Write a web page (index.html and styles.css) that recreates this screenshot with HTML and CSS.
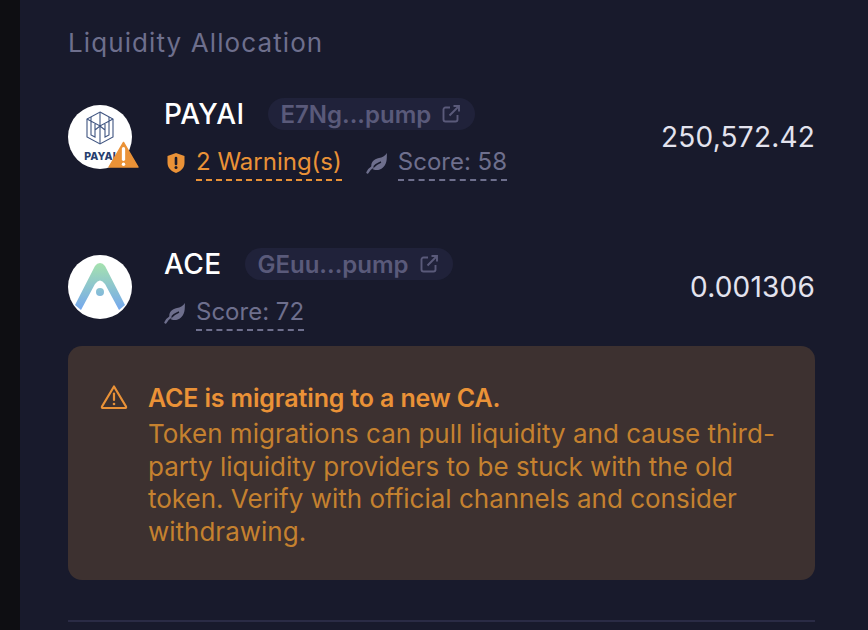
FILE: index.html
```html
<!DOCTYPE html>
<html lang="en">
<head>
<meta charset="utf-8">
<title>Liquidity Allocation</title>
<link rel="stylesheet" href="styles.css">
</head>
<body>
<div class="strip"></div>
<main class="panel">
  <h2 class="heading">Liquidity Allocation</h2>

  <section class="row row-first">
    <div class="avatar">
      <svg class="logo" viewBox="0 0 64 64" width="64" height="64">
        <circle cx="32" cy="32" r="32" fill="#fff"/>
        <g fill="none" stroke="#3f5480" stroke-width="1.100">
          <path d="M32 7 L45 14 V32 L32 39 L19 32 V14 Z"/>
          <path d="M19 14 L32 21 L45 14 M32 7 V39 M23 12 V30 L27 32 V19 M27 25 L32 21 L37 25 M41 12 V30 L37 32 V19"/>
        </g>
        <text class="logo-text" x="32" y="55" text-anchor="middle">PAYAI</text>
      </svg>
      <svg class="warn-badge" viewBox="0 0 32 28" width="31" height="27">
        <path d="M16 1.500 L31 27 H1 Z" fill="#ea9237" stroke="#ea9237" stroke-width="1.500" stroke-linejoin="round"/>
        <path d="M16 8 V19" stroke="#fff" stroke-width="3.400" stroke-linecap="round"/>
        <circle cx="16" cy="24" r="1.800" fill="#fff"/>
      </svg>
    </div>
    <div class="info">
      <div class="title">
        <span class="name">PAYAI</span>
        <span class="pill">E7Ng...pump
          <svg class="ext" viewBox="0 0 20 20" width="20" height="20"><path d="M9 3.500H4.500a2 2 0 0 0-2 2v10a2 2 0 0 0 2 2h10a2 2 0 0 0 2-2V11M8.500 11.500 18 2M12.500 2H18V7.500" fill="none" stroke="currentColor" stroke-width="1.900"/></svg>
        </span>
      </div>
      <div class="meta">
        <svg class="icon shield" viewBox="0 0 20 22" width="20" height="22"><path d="M10 1 L18.500 4 V11 C18.500 16 14.500 19.500 10 21 C5.500 19.500 1.500 16 1.500 11 V4 Z" fill="#ea9237"/><path d="M10 6 V12" stroke="#181a2c" stroke-width="2.600" stroke-linecap="round"/><circle cx="10" cy="15.500" r="1.500" fill="#181a2c"/></svg>
        <span class="tag tag-warn">2 Warning(s)</span>
        <svg class="icon leaf leaf-spaced" viewBox="0 0 22 22" width="22" height="22"><path d="M21 1 C20.500 4 22 11 17 15.500 C13 19 8.500 18.500 6 16.500 C3.500 11 8 7 13 6 C16 5.400 19 4 21 1 Z" fill="#6e6f8d"/><path d="M6 16.500 C8 14 11 11.500 15 10" fill="none" stroke="#181a2c" stroke-width="1.500"/><path d="M1.500 20.500 C2.500 18.500 4 16.500 6.500 15" fill="none" stroke="#6e6f8d" stroke-width="2.400" stroke-linecap="round"/></svg>
        <span class="tag tag-score">Score: 58</span>
      </div>
    </div>
    <div class="amount">250,572.42</div>
  </section>

  <section class="row">
    <div class="avatar">
      <svg class="logo" viewBox="0 0 64 64" width="64" height="64">
        <defs>
          <linearGradient id="ace" gradientUnits="userSpaceOnUse" x1="0" y1="8" x2="0" y2="55">
            <stop offset="0" stop-color="#a5e2ae"/>
            <stop offset="1" stop-color="#75a8ee"/>
          </linearGradient>
        </defs>
        <circle cx="32" cy="32" r="32" fill="#fff"/>
        <path d="M32 8 Q29 8 27 11 L7 50 L13 55 L27 29 Q32 22 37 29 L51 55 L57 50 L37 11 Q35 8 32 8 Z" fill="url(#ace)"/>
        <circle cx="32" cy="37" r="4" fill="url(#ace)"/>
      </svg>
    </div>
    <div class="info">
      <div class="title">
        <span class="name">ACE</span>
        <span class="pill">GEuu...pump
          <svg class="ext" viewBox="0 0 20 20" width="20" height="20"><path d="M9 3.500H4.500a2 2 0 0 0-2 2v10a2 2 0 0 0 2 2h10a2 2 0 0 0 2-2V11M8.500 11.500 18 2M12.500 2H18V7.500" fill="none" stroke="currentColor" stroke-width="1.900"/></svg>
        </span>
      </div>
      <div class="meta">
        <svg class="icon leaf" viewBox="0 0 22 22" width="22" height="22"><path d="M21 1 C20.500 4 22 11 17 15.500 C13 19 8.500 18.500 6 16.500 C3.500 11 8 7 13 6 C16 5.400 19 4 21 1 Z" fill="#6e6f8d"/><path d="M6 16.500 C8 14 11 11.500 15 10" fill="none" stroke="#181a2c" stroke-width="1.500"/><path d="M1.500 20.500 C2.500 18.500 4 16.500 6.500 15" fill="none" stroke="#6e6f8d" stroke-width="2.400" stroke-linecap="round"/></svg>
        <span class="tag tag-score">Score: 72</span>
      </div>
    </div>
    <div class="amount">0.001306</div>
  </section>

  <aside class="notice">
    <svg class="notice-icon" viewBox="0 0 28 26" width="28" height="26"><path d="M14 2.500 L26 22.500 A1 1 0 0 1 25 24 H3 A1 1 0 0 1 2 22.500 Z" fill="none" stroke="#ea9237" stroke-width="2.200" stroke-linejoin="round"/><path d="M14 9.500 V16" stroke="#ea9237" stroke-width="2.200" stroke-linecap="round"/><circle cx="14" cy="20" r="1.300" fill="#ea9237"/></svg>
    <div class="notice-body">
      <strong class="notice-title">ACE is migrating to a new CA.</strong>
      <p class="notice-text">Token migrations can pull liquidity and cause third-party liquidity providers to be stuck with the old token. Verify with official channels and consider withdrawing.</p>
    </div>
  </aside>

  <hr class="divider">
</main>
</body>
</html>
```
FILE: styles.css
```css
* { box-sizing: border-box; }
html, body { height: 100%; }
body {
  margin: 0;
  display: flex;
  overflow: hidden;
  background: #0e0e12;
  font-family: Inter, "Liberation Sans", sans-serif;
}
.strip { width: 20px; flex: none; background: #0e0e12; }
.panel {
  flex: 1;
  min-width: 0;
  padding: 25px 53px 0 48px;
  background: #181a2c;
}
.heading {
  margin: 0 0 37px;
  font-size: 26px;
  line-height: 36px;
  font-weight: 400;
  color: #6e6f8d;
  letter-spacing: 1.100px;
}
.row {
  display: flex;
  align-items: center;
  height: 78px;
}
.row-first { margin-bottom: 72px; }
.avatar { position: relative; width: 64px; height: 64px; flex: none; }
.logo { display: block; }
.logo-text { font-size: 10.500px; font-weight: 800; fill: #27406f; }
.warn-badge { position: absolute; right: -7px; bottom: 1px; }
.info { align-self: flex-start; margin-left: 32px; flex: 1; min-width: 0; }
.title { display: flex; align-items: center; height: 32px; }
.name { font-size: 28px; letter-spacing: 0.400px; font-weight: 500; line-height: 32px; color: #fff; }
.pill {
  display: inline-flex;
  align-items: center;
  gap: 10px;
  height: 32px;
  margin-left: 24px;
  padding: 0 14px 0 12px;
  border-radius: 16px;
  background: #20223a;
  color: #5a5a7a;
  font-size: 24px;
  font-weight: 600;
}
.ext { flex: none; }
.meta { display: flex; align-items: center; height: 34px; margin-top: 16px; }
.icon { flex: none; }
.shield { margin: 0 10px 0 2px; }
.leaf { margin-right: 10px; }
.leaf-spaced { margin-left: 24px; }
.tag {
  font-size: 24px;
  line-height: 34px;
  height: 36px;
  border-bottom: 2px dashed;
}
.tag-warn { color: #ea9237; border-color: #ea9237; }
.tag-score { color: #6e6f8d; border-color: #6e6f8d; }
.amount { font-size: 28px; letter-spacing: 0.200px; font-weight: 400; color: #e3e3ee; white-space: nowrap; }
.notice {
  display: flex;
  gap: 20px;
  margin-top: 20px;
  height: 234px;
  padding: 36px 32px 0 32px;
  border-radius: 14px;
  background: #3d3130;
}
.notice-icon { flex: none; margin-top: 2px; }
.notice-body { flex: 1; min-width: 0; }
.notice-title { display: block; font-size: 25px; letter-spacing: -0.150px; line-height: 32px; font-weight: 600; color: #ea9237; }
.notice-text { margin: 4px 0 0; font-size: 26px; line-height: 32.500px; color: #c5812f; }
.divider { margin: 40px 0 0; border: 0; height: 2px; background: #2a2b45; }
```
